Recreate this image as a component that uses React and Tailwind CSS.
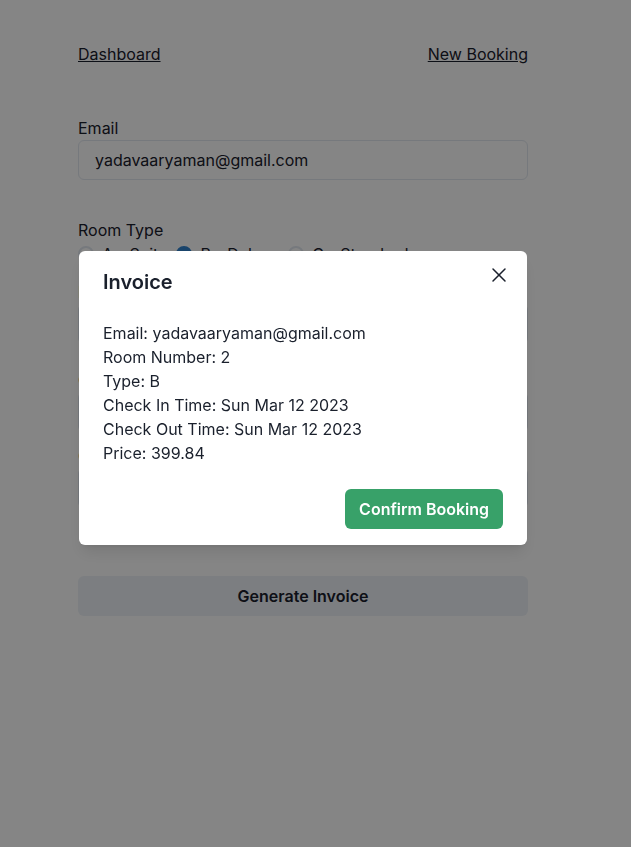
import React from 'react';
import { X } from 'lucide-react';

function Radio({ label, checked }) {
  return (
    <label className="flex items-center gap-2">
      <span
        className={`flex h-4 w-4 items-center justify-center rounded-full border-2 ${
          checked ? 'border-[#3182ce] bg-[#3182ce]' : 'border-[#e2e8f0] bg-white'
        }`}
      >
        {checked && <span className="h-[6px] w-[6px] rounded-full bg-white" />}
      </span>
      <span>{label}</span>
    </label>
  );
}

function BookingForm() {
  return (
    <div className="ml-[78px] w-[450px] pt-[42px]">
      <nav className="flex justify-between leading-6">
        <a className="underline">Dashboard</a>
        <a className="underline">New Booking</a>
      </nav>

      <div className="mt-[50px]">
        <div className="leading-6">Email</div>
        <div className="flex h-10 items-center rounded-md border border-[#e2e8f0] px-4">
          yadavaaryaman@gmail.com
        </div>
      </div>

      <div className="mt-[38px]">
        <div className="leading-6">Room Type</div>
        <div className="flex gap-[9px] leading-6">
          <Radio label="A - Suite" />
          <Radio label="B - Deluxe" checked />
          <Radio label="C - Standard" />
        </div>
      </div>

      <div className="mt-[14px]">
        <div className="leading-6">Room Number</div>
        <div className="flex h-10 items-center rounded-md border border-[#e2e8f0] px-4">2</div>
      </div>

      <div className="mt-[24px]">
        <div className="leading-6">Check In Time</div>
        <div className="flex h-10 items-center rounded-md border border-[#e2e8f0] px-4">2023-03-12</div>
      </div>

      <div className="mt-[12px]">
        <div className="leading-6">Check Out Time</div>
        <div className="flex h-10 items-center rounded-md border border-[#e2e8f0] px-4">2023-03-12</div>
      </div>

      <button className="mt-[68px] h-10 w-full rounded-md bg-[#edf2f7] font-semibold">
        Generate Invoice
      </button>
    </div>
  );
}

function InvoiceModal() {
  const lines = [
    'Email: yadavaaryaman@gmail.com',
    'Room Number: 2',
    'Type: B',
    'Check In Time: Sun Mar 12 2023',
    'Check Out Time: Sun Mar 12 2023',
    'Price: 399.84',
  ];

  return (
    <div className="fixed inset-0 bg-black/[0.48]">
      <div className="relative ml-[79px] mt-[251px] w-[448px] rounded-md bg-white shadow-lg">
        <header className="px-6 py-4 text-xl font-semibold leading-[30px]">Invoice</header>
        <button className="absolute right-3 top-2 flex h-8 w-8 items-center justify-center rounded-md">
          <X className="h-6 w-6" strokeWidth={1.5} />
        </button>
        <div className="px-6 py-2 leading-6">
          {lines.map((l) => (
            <div key={l}>{l}</div>
          ))}
        </div>
        <footer className="flex justify-end px-6 py-4">
          <button className="h-10 rounded-md bg-[#38a169] px-[14px] font-semibold text-white">
            Confirm Booking
          </button>
        </footer>
      </div>
    </div>
  );
}

export default function App() {
  return (
    <div className="relative min-h-screen bg-white text-[#1a202c] font-['Inter',sans-serif]">
      <BookingForm />
      <InvoiceModal />
    </div>
  );
}
